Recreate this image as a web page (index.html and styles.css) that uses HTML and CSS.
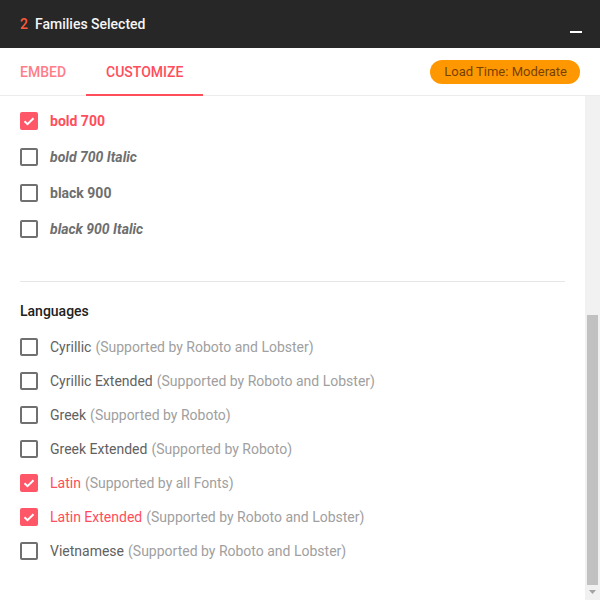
FILE: index.html
```html
<!DOCTYPE html>
<html>
<head>
<meta charset="utf-8">
<link rel="stylesheet" href="styles.css">
</head>
<body>
<div class="panel">
  <header class="topbar">
    <div class="title"><span class="count">2</span>Families Selected</div>
    <span class="minimize"></span>
  </header>
  <nav class="tabs">
    <div class="tab">EMBED</div>
    <div class="tab active">CUSTOMIZE</div>
    <div class="spacer"></div>
    <div class="badge">Load Time: Moderate</div>
  </nav>
  <div class="body">
    <div class="content">
      <section class="weights">
        <label class="row"><span class="box checked"><svg viewBox="0 0 18 18"><path d="M4.5 9.2l3 3 6-6" /></svg></span><span class="w on">bold 700</span></label>
        <label class="row"><span class="box"></span><span class="w i">bold 700 Italic</span></label>
        <label class="row"><span class="box"></span><span class="w">black 900</span></label>
        <label class="row"><span class="box"></span><span class="w i">black 900 Italic</span></label>
      </section>
      <section class="languages">
        <h3 class="heading">Languages</h3>
        <label class="lrow"><span class="box"></span><span class="lang">Cyrillic</span><span class="note">(Supported by Roboto and Lobster)</span></label>
        <label class="lrow"><span class="box"></span><span class="lang">Cyrillic Extended</span><span class="note">(Supported by Roboto and Lobster)</span></label>
        <label class="lrow"><span class="box"></span><span class="lang">Greek</span><span class="note">(Supported by Roboto)</span></label>
        <label class="lrow"><span class="box"></span><span class="lang">Greek Extended</span><span class="note">(Supported by Roboto)</span></label>
        <label class="lrow"><span class="box checked"><svg viewBox="0 0 18 18"><path d="M4.5 9.2l3 3 6-6" /></svg></span><span class="lang on">Latin</span><span class="note">(Supported by all Fonts)</span></label>
        <label class="lrow"><span class="box checked"><svg viewBox="0 0 18 18"><path d="M4.5 9.2l3 3 6-6" /></svg></span><span class="lang on">Latin Extended</span><span class="note">(Supported by Roboto and Lobster)</span></label>
        <label class="lrow"><span class="box"></span><span class="lang">Vietnamese</span><span class="note">(Supported by Roboto and Lobster)</span></label>
      </section>
    </div>
    <div class="scrollbar">
      <div class="track"></div>
      <div class="thumb"></div>
      <div class="arrow"><svg viewBox="0 0 15 15"><path d="M4 5h7l-3.5 4z" /></svg></div>
    </div>
  </div>
</div>
</body>
</html>
```
FILE: styles.css
```css
* { box-sizing: border-box; }
html, body { margin: 0; padding: 0; }
body {
  font-family: Roboto, "Liberation Sans", sans-serif;
  font-size: 14px;
  background: #fff;
}
.panel {
  width: 600px;
  height: 600px;
  display: flex;
  flex-direction: column;
  overflow: hidden;
}
.topbar {
  height: 48px;
  flex: none;
  background: #272727;
  display: flex;
  align-items: center;
  padding: 0 18px 0 20px;
}
.title {
  flex: 1;
  color: #f5f5f5;
  font-weight: 500;
  font-size: 14px;
}
.count {
  color: #ff5a3c;
  margin-right: 7px;
}
.minimize {
  width: 12px;
  height: 2px;
  background: #fff;
  margin-top: 16px;
}
.tabs {
  height: 48px;
  flex: none;
  display: flex;
  align-items: stretch;
  border-bottom: 1px solid #ececec;
  padding-right: 20px;
}
.tab {
  display: flex;
  align-items: center;
  padding: 1px 20px 0;
  font-weight: 500;
  font-size: 14px;
  color: #ff7d88;
  border-bottom: 2px solid transparent;
  margin-bottom: -1px;
}
.tab.active {
  color: #ff4d5c;
  border-bottom-color: #ff4d5c;
}
.spacer { flex: 1; }
.badge {
  align-self: center;
  margin-top: 1px;
  height: 24px;
  line-height: 24px;
  padding: 0 13px 0 14px;
  border-radius: 12px;
  background: #ff9800;
  color: #774200;
  font-size: 13px;
  font-weight: 400;
}
.body {
  flex: 1;
  display: flex;
  min-height: 0;
}
.content {
  flex: 1;
  overflow: hidden;
}
.scrollbar {
  width: 15px;
  flex: none;
  background: #f1f1f1;
  display: flex;
  flex-direction: column;
}
.track { flex: 1; }
.thumb {
  height: 270px;
  margin: 0 2px;
  background: #c1c1c1;
}
.arrow {
  height: 15px;
  display: flex;
}
.arrow svg {
  width: 15px;
  height: 15px;
  fill: #a3a3a3;
}
.weights {
  margin: 0 20px;
  padding: 7px 0 34px;
  border-bottom: 1px solid #e6e6e6;
}
.heading {
  margin: 0 0 9px;
  height: 20px;
  line-height: 20px;
  font-size: 14px;
  font-weight: 500;
  color: #212121;
}
.row {
  height: 36px;
  display: flex;
  align-items: center;
}
.box {
  width: 18px;
  height: 18px;
  border: 2px solid #707070;
  border-radius: 2px;
  margin-right: 12px;
  flex: none;
  display: flex;
}
.box.checked {
  background: #ff5767;
  border-color: #ff5767;
}
.box svg {
  width: 18px;
  height: 18px;
  margin: -2px;
  fill: none;
  stroke: #fff;
  stroke-width: 2;
}
.w {
  color: #6e6e6e;
  font-weight: 700;
  font-size: 14px;
}
.w.i { font-style: italic; }
.w.on { color: #ff4d5c; }
.languages {
  padding: 19px 20px 32px;
}
.lrow {
  height: 34px;
  display: flex;
  align-items: center;
  font-size: 14px;
}
.lang {
  color: #616161;
  margin-right: 4px;
}
.lang.on { color: #ff4d5c; }
.note { color: #a0a0a0; }
```
